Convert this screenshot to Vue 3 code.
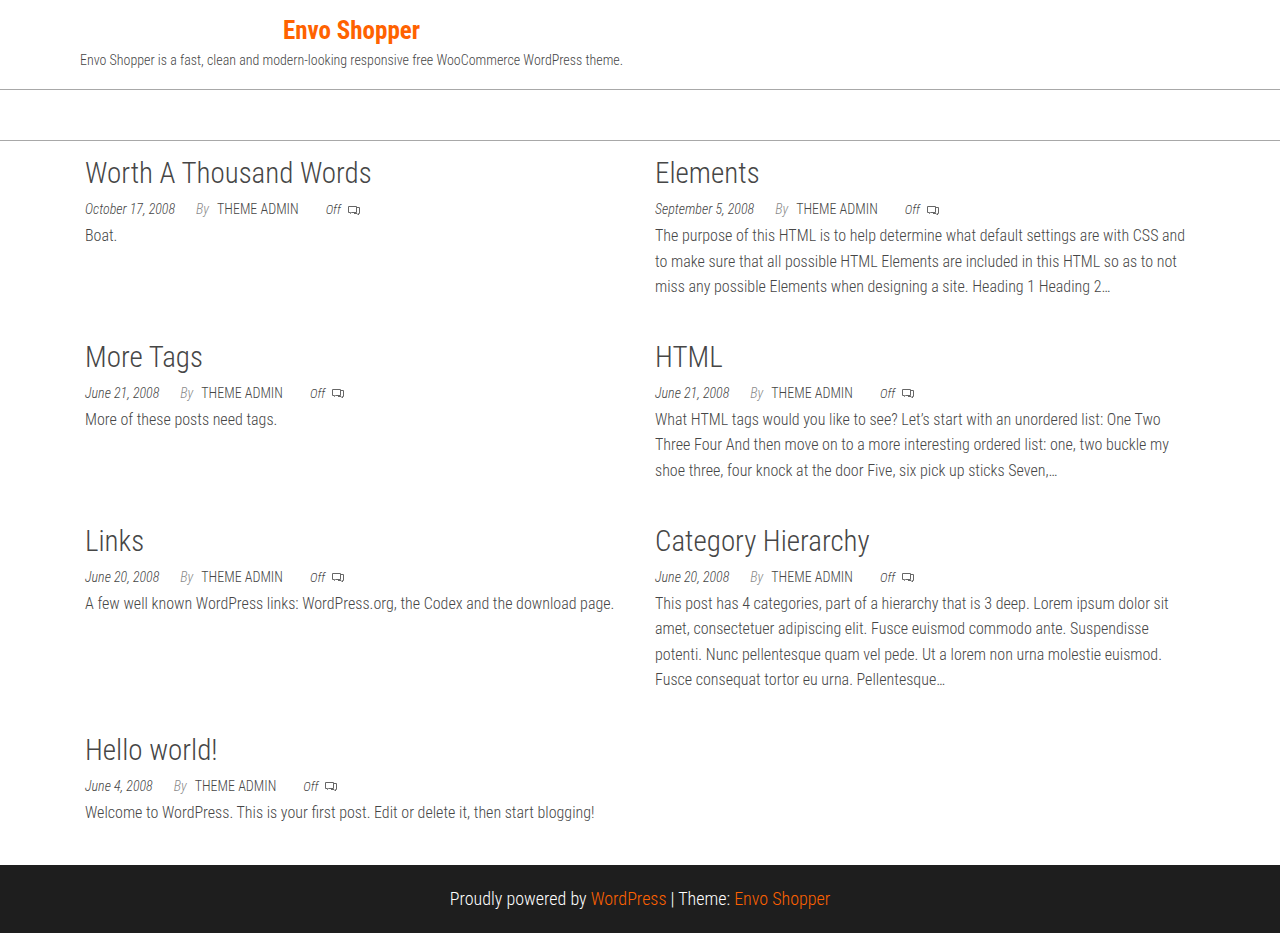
<script setup>
const posts = [
  { title: 'Worth A Thousand Words', date: 'October 17, 2008', text: 'Boat.' },
  { title: 'Elements', date: 'September 5, 2008', text: 'The purpose of this HTML is to help determine what default settings are with CSS and to make sure that all possible HTML Elements are included in this HTML so as to not miss any possible Elements when designing a site. Heading 1 Heading 2…' },
  { title: 'More Tags', date: 'June 21, 2008', text: 'More of these posts need tags.' },
  { title: 'HTML', date: 'June 21, 2008', text: 'What HTML tags would you like to see? Let’s start with an unordered list: One Two Three Four And then move on to a more interesting ordered list: one, two buckle my shoe three, four knock at the door Five, six pick up sticks Seven,…' },
  { title: 'Links', date: 'June 20, 2008', text: 'A few well known WordPress links: WordPress.org, the Codex and the download page.' },
  { title: 'Category Hierarchy', date: 'June 20, 2008', text: 'This post has 4 categories, part of a hierarchy that is 3 deep. Lorem ipsum dolor sit amet, consectetuer adipiscing elit. Fusce euismod commodo ante. Suspendisse potenti. Nunc pellentesque quam vel pede. Ut a lorem non urna molestie euismod. Fusce consequat tortor eu urna. Pellentesque…' },
  { title: 'Hello world!', date: 'June 4, 2008', text: 'Welcome to WordPress. This is your first post. Edit or delete it, then start blogging!' },
]
</script>

<template>
  <div class="page">
    <header class="site-header">
      <div class="container">
        <div class="branding">
          <h1 class="site-title"><a href="#">Envo Shopper</a></h1>
          <p class="tagline">Envo Shopper is a fast, clean and modern-looking responsive free WooCommerce WordPress theme.</p>
        </div>
      </div>
    </header>
    <nav class="menu-bar" aria-label="Main menu"></nav>

    <main class="container posts">
      <article v-for="post in posts" :key="post.title" class="post">
        <h2 class="post-title"><a href="#">{{ post.title }}</a></h2>
        <div class="meta">
          <time class="date">{{ post.date }}</time>
          <span class="by">By</span>
          <a class="author" href="#">Theme Admin</a>
          <span class="comments">Off</span>
          <svg class="icon" viewBox="0 0 12 12" aria-hidden="true">
            <path d="M.5 2.500h8v6h-5l-1 1v-1h-2zM8.500 3.500h3v6h-1v1.500l-1.500-1.500h-3" />
          </svg>
        </div>
        <p class="excerpt">{{ post.text }}</p>
      </article>
    </main>

    <footer class="site-footer">
      Proudly powered by <a href="#">WordPress</a> | Theme: <a href="#">Envo Shopper</a>
    </footer>
  </div>
</template>

<style>
body {
  margin: 0;
  background: #fff;
}
</style>

<style scoped>
.page {
  font-family: "Roboto Condensed", Roboto, sans-serif;
  font-size: 16px;
  font-weight: 300;
  line-height: 1.6;
  color: #464646;
}
a {
  color: inherit;
  text-decoration: none;
}
.container {
  box-sizing: border-box;
  max-width: 1140px;
  margin: 0 auto;
}
.site-header {
  border-bottom: 1px solid #a8a8a8;
}
.site-header .container {
  display: flex;
  padding: 15px 10px 17px;
}
.branding {
  text-align: center;
}
.site-title {
  margin: 0;
  font-size: 25px;
  font-weight: 700;
  line-height: 31px;
  color: #ff6200;
}
.tagline {
  margin: 3px 0 0;
  font-size: 14px;
  line-height: 23px;
}
.menu-bar {
  height: 50px;
  border-bottom: 1px solid #a8a8a8;
}
.posts {
  display: grid;
  grid-template-columns: repeat(2, minmax(0, 1fr));
  column-gap: 30px;
  padding: 0 15px 14px;
}
.post {
  padding: 14px 0 25px;
}
.post-title {
  margin: 0 0 5px;
  font-size: 29px;
  font-weight: 300;
  line-height: 36px;
}
.meta {
  display: flex;
  align-items: center;
  font-size: 14px;
  line-height: 27px;
}
.date {
  font-style: italic;
}
.by {
  margin: 0 8px 0 21px;
  font-style: italic;
  color: #8a8a8a;
}
.author {
  text-transform: uppercase;
}
.comments {
  margin: 0 7px 0 27px;
  font-size: 13px;
  font-style: italic;
}
.icon {
  width: 12px;
  height: 12px;
  fill: none;
  stroke: #666;
}
.excerpt {
  margin: 0;
}
.site-footer {
  padding: 20px 15px;
  background: #1e1e1e;
  font-size: 18px;
  line-height: 28px;
  text-align: center;
  color: #fff;
}
.site-footer a {
  color: #ff6200;
}
</style>
